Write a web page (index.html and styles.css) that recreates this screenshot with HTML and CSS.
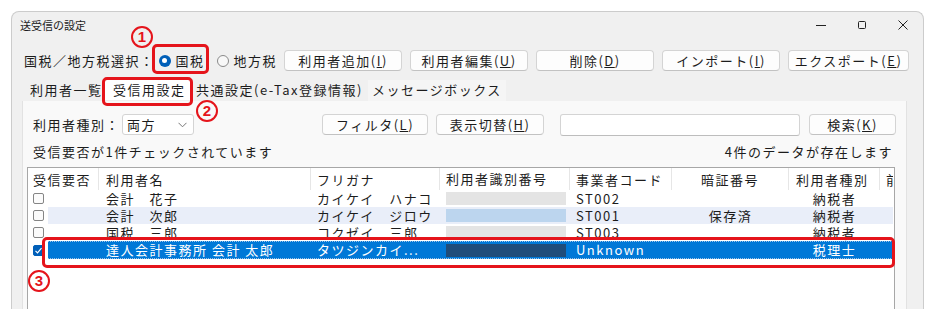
FILE: index.html
```html
<!DOCTYPE html>
<html>
<head>
  <meta charset="utf-8">
  <title>送受信の設定</title>
  <link rel="stylesheet" href="styles.css">
</head>
<body>

<div class="window">
  <div class="titlebar">
    <span class="title">送受信の設定</span>
    <div class="controls">
      <span class="ctl"><svg width="10" height="10" viewBox="0 0 10 10"><path d="M0 5.5h10" stroke="#222" stroke-width="1"/></svg></span>
      <span class="ctl"><svg width="10" height="10" viewBox="0 0 10 10"><rect x="1.5" y="1.5" width="7" height="7" rx="1" fill="none" stroke="#222" stroke-width="1"/></svg></span>
      <span class="ctl"><svg width="10" height="10" viewBox="0 0 10 10"><path d="M0.5 0.5l9 9M9.5 0.5l-9 9" stroke="#222" stroke-width="1"/></svg></span>
    </div>
  </div>

  <div class="toolbar">
    <span class="label">国税／地方税選択：</span>
    <span class="radio"><span class="dot checked"></span>国税</span>
    <span class="radio second"><span class="dot"></span>地方税</span>
    <button class="btn first">利用者追加(<u>I</u>)</button>
    <button class="btn">利用者編集(<u>U</u>)</button>
    <button class="btn">削除(<u>D</u>)</button>
    <button class="btn">インポート(<u>I</u>)</button>
    <button class="btn wide">エクスポート(<u>E</u>)</button>
  </div>

  <div class="tabs">
    <span class="tab t1">利用者一覧</span>
    <span class="tab t2 active">受信用設定</span>
    <span class="tab t3">共通設定(e-Tax登録情報)</span>
    <span class="tab t4">メッセージボックス</span>
  </div>

  <div class="panel">
    <div class="filter-row">
      <span class="label">利用者種別：</span>
      <div class="select">
        <span>両方</span>
        <svg width="9" height="6" viewBox="0 0 9 6"><path d="M0.5 0.8l4 4 4-4" fill="none" stroke="#777" stroke-width="1"/></svg>
      </div>
      <button class="btn filter">フィルタ(<u>L</u>)</button>
      <button class="btn toggle">表示切替(<u>H</u>)</button>
      <input type="text" class="search">
      <button class="btn find">検索(<u>K</u>)</button>
    </div>

    <div class="status-row">
      <span>受信要否が1件チェックされています</span>
      <span>4件のデータが存在します</span>
    </div>

    <div class="list">
      <div class="list-head">
        <span class="h h-check">受信要否</span>
        <span class="h h-name">利用者名</span>
        <span class="h c-kana">フリガナ</span>
        <span class="h c-id">利用者識別番号</span>
        <span class="h c-code">事業者コード</span>
        <span class="h c-pin center">暗証番号</span>
        <span class="h c-type">利用者種別</span>
        <span class="h c-rest">前</span>
      </div>

      <div class="row">
        <span class="c-box"><span class="checkbox"></span></span>
        <div class="cells">
          <span class="c-name">会計　花子</span>
          <span class="c-kana">カイケイ　ハナコ</span>
          <span class="c-id"><span class="bar"></span></span>
          <span class="c-code">ST002</span>
          <span class="c-pin center"></span>
          <span class="c-type center">納税者</span>
        </div>
      </div>

      <div class="row alt">
        <span class="c-box"><span class="checkbox"></span></span>
        <div class="cells">
          <span class="c-name">会計　次郎</span>
          <span class="c-kana">カイケイ　ジロウ</span>
          <span class="c-id"><span class="bar"></span></span>
          <span class="c-code">ST001</span>
          <span class="c-pin center">保存済</span>
          <span class="c-type center">納税者</span>
        </div>
      </div>

      <div class="row">
        <span class="c-box"><span class="checkbox"></span></span>
        <div class="cells">
          <span class="c-name">国税　三郎</span>
          <span class="c-kana">コクゼイ　三郎</span>
          <span class="c-id"><span class="bar"></span></span>
          <span class="c-code">ST003</span>
          <span class="c-pin center"></span>
          <span class="c-type center">納税者</span>
        </div>
      </div>

      <div class="row selected">
        <span class="c-box">
          <span class="checkbox checked"><svg width="9" height="9" viewBox="0 0 9 9"><path d="M1.5 4.8l2 2 4-4.6" fill="none" stroke="#fff" stroke-width="1.2"/></svg></span>
        </span>
        <div class="cells">
          <span class="c-name">達人会計事務所 会計 太郎</span>
          <span class="c-kana">タツジンカイ...</span>
          <span class="c-id"><span class="bar"></span></span>
          <span class="c-code">Unknown</span>
          <span class="c-pin center"></span>
          <span class="c-type center">税理士</span>
        </div>
      </div>
    </div>
  </div>
</div>

<!-- annotations -->
<div class="mark mark1"></div>
<div class="mark mark2"></div>
<div class="mark mark3"></div>
<span class="num num1">1</span>
<span class="num num2">2</span>
<span class="num num3">3</span>

</body>
</html>
```

FILE: styles.css
```css
* {
  box-sizing: border-box;
}

body {
  margin: 0;
  height: 309px;
  overflow: hidden;
  position: relative;
  background-color: #fff;
  font-family: "Noto Sans CJK JP", sans-serif;
  font-size: 13px;
  letter-spacing: 1.5px;
  color: #1c1c1c;
}

.window {
  margin: 11px 0 0 11px;
  width: 913px;
  height: 320px;
  background-color: #f0f0f0;
  border: 1px solid #cccccc;
  border-bottom: none;
  border-radius: 8px 8px 0 0;
}

/* title bar */
.titlebar {
  height: 25px;
  display: flex;
  align-items: center;
  padding-left: 8px;
}

.title {
  font-size: 11px;
  letter-spacing: 0;
}

.controls {
  margin-left: auto;
  display: flex;
}

.ctl {
  width: 41px;
  height: 25px;
  display: flex;
  align-items: center;
  justify-content: center;
}

/* toolbar */
.toolbar {
  margin-top: 13px;
  height: 21px;
  padding-left: 12px;
  display: flex;
  align-items: center;
}

.radio {
  display: flex;
  align-items: center;
  margin-left: 4px;
}

.radio.second {
  margin-left: 12px;
}

.dot {
  width: 12px;
  height: 12px;
  margin-right: 5px;
  border-radius: 50%;
  border: 1px solid #8a8a8a;
  background-color: #f8f8f8;
  display: flex;
  align-items: center;
  justify-content: center;
}

.dot.checked {
  border: none;
  background-color: #005fb8;
}

.dot.checked::after {
  content: "";
  width: 5px;
  height: 5px;
  border-radius: 50%;
  background-color: #fff;
}

.btn {
  width: 118px;
  height: 21px;
  margin-left: 8px;
  padding: 0;
  font: inherit;
  letter-spacing: inherit;
  color: inherit;
  background-color: #fdfdfd;
  border: 1px solid #d4d4d4;
  border-bottom-color: #c2c2c2;
  border-radius: 4px;
}

.btn.first {
  margin-left: 7px;
}

.btn.wide {
  width: 121px;
}

/* tabs */
.tabs {
  margin-top: 9px;
  height: 21px;
  padding-left: 12px;
  display: flex;
}

.tab {
  height: 21px;
  line-height: 20px;
  background-color: #f5f5f5;
}

.t1 {
  width: 79px;
  padding-left: 6px;
  background-color: #f0f0f0;
}

.t2 {
  width: 89px;
  padding-left: 10px;
}

.t3 {
  width: 176px;
  padding-left: 4px;
  background-color: #f0f0f0;
}

.t4 {
  width: 138px;
  padding-left: 4px;
}

.tab.active {
  background-color: #fff;
  height: 22px;
  margin-top: -2px;
  line-height: 24px;
}

/* panel */
.panel {
  margin-left: 10px;
  width: 885px;
  height: 220px;
  background-color: #f9f9f9;
  border-left: 1px solid #e2e2e2;
  border-right: 1px solid #e2e2e2;
  padding-top: 13px;
}

.filter-row {
  height: 21px;
  padding-left: 10px;
  display: flex;
  align-items: center;
}

.select {
  width: 72px;
  height: 21px;
  margin-left: 2px;
  padding: 0 6px 0 4px;
  display: flex;
  align-items: center;
  justify-content: space-between;
  background-color: #fff;
  border: 1px solid #d4d4d4;
  border-radius: 3px;
}

.btn.filter {
  width: 106px;
  margin-left: 128px;
}

.btn.toggle {
  width: 108px;
}

.search {
  width: 240px;
  height: 22px;
  margin-left: 16px;
  background-color: #fff;
  border: 1px solid #d4d4d4;
  border-bottom-color: #bdbdbd;
  border-radius: 3px;
}

.btn.find {
  width: 87px;
  margin-left: 9px;
}

.status-row {
  margin-top: 9px;
  height: 16px;
  line-height: 16px;
  padding: 0 13px 0 10px;
  display: flex;
  justify-content: space-between;
}

/* list */
.list {
  margin: 7px 0 0 4px;
  width: 868px;
  height: 160px;
  background-color: #fff;
  border: 1px solid #a7a7a7;
  overflow: hidden;
}

.list-head {
  height: 22px;
  display: flex;
}

.h {
  height: 22px;
  line-height: 24px;
  border-right: 1px solid #e6e6e6;
  white-space: nowrap;
  overflow: hidden;
}

.h-check {
  width: 71px;
  padding-left: 5px;
}

.h-name {
  width: 212px;
  padding-left: 7px;
}

.c-kana {
  width: 129px;
  padding-left: 6px;
}

.c-id {
  width: 130px;
  padding-left: 6px;
  display: flex;
  align-items: center;
}

.c-code {
  width: 102px;
  padding-left: 6px;
}

.c-pin {
  width: 117px;
}

.c-type {
  width: 91px;
  padding-left: 7px;
}

.c-rest {
  width: 13px;
  padding-left: 6px;
  border-right: none;
}

.center {
  text-align: center;
  padding-left: 0;
}

.row {
  height: 17px;
  line-height: 17px;
  display: flex;
}

.c-box {
  width: 20px;
  display: flex;
  align-items: center;
  padding-left: 5px;
}

.checkbox {
  width: 11px;
  height: 11px;
  border: 1px solid #858585;
  border-radius: 2px;
  background-color: #fbfbfb;
  display: flex;
  align-items: center;
  justify-content: center;
}

.checkbox.checked {
  border-color: #005fb8;
  background-color: #005fb8;
}

.cells {
  width: 845px;
  display: flex;
  white-space: nowrap;
}

.cells span {
  overflow: hidden;
}

.c-name {
  width: 263px;
  padding-left: 58px;
}

.bar {
  width: 120px;
  height: 13px;
  background-color: #e4e4e4;
}

.row.alt .cells {
  background-color: #e9eef9;
}

.row.alt .bar {
  background-color: #bcd5ee;
}

.row.selected .cells {
  background-color: #0078d7;
  color: #fff;
  border-top: 1px dotted #9cc3e8;
  border-bottom: 1px dotted #9cc3e8;
  line-height: 15px;
}

.row.selected .bar {
  background-color: #1f4c7a;
}

.row.selected {
  height: 18px;
}

/* red annotations */
.mark {
  position: absolute;
  border: 3px solid #e5141b;
  border-radius: 5px;
}

.mark1 {
  left: 152px;
  top: 44px;
  width: 57px;
  height: 30px;
}

.mark2 {
  left: 102px;
  top: 77px;
  width: 91px;
  height: 29px;
}

.mark3 {
  left: 42px;
  top: 237px;
  width: 853px;
  height: 31px;
}

.num {
  position: absolute;
  width: 22px;
  height: 22px;
  border: 2px solid #e5141b;
  border-radius: 50%;
  color: #e5141b;
  font-family: "Liberation Sans", sans-serif;
  font-weight: bold;
  font-size: 15px;
  letter-spacing: 0;
  line-height: 18px;
  text-align: center;
}

.num1 {
  left: 131px;
  top: 26px;
}

.num2 {
  left: 196px;
  top: 100px;
}

.num3 {
  left: 28px;
  top: 270px;
}
```
